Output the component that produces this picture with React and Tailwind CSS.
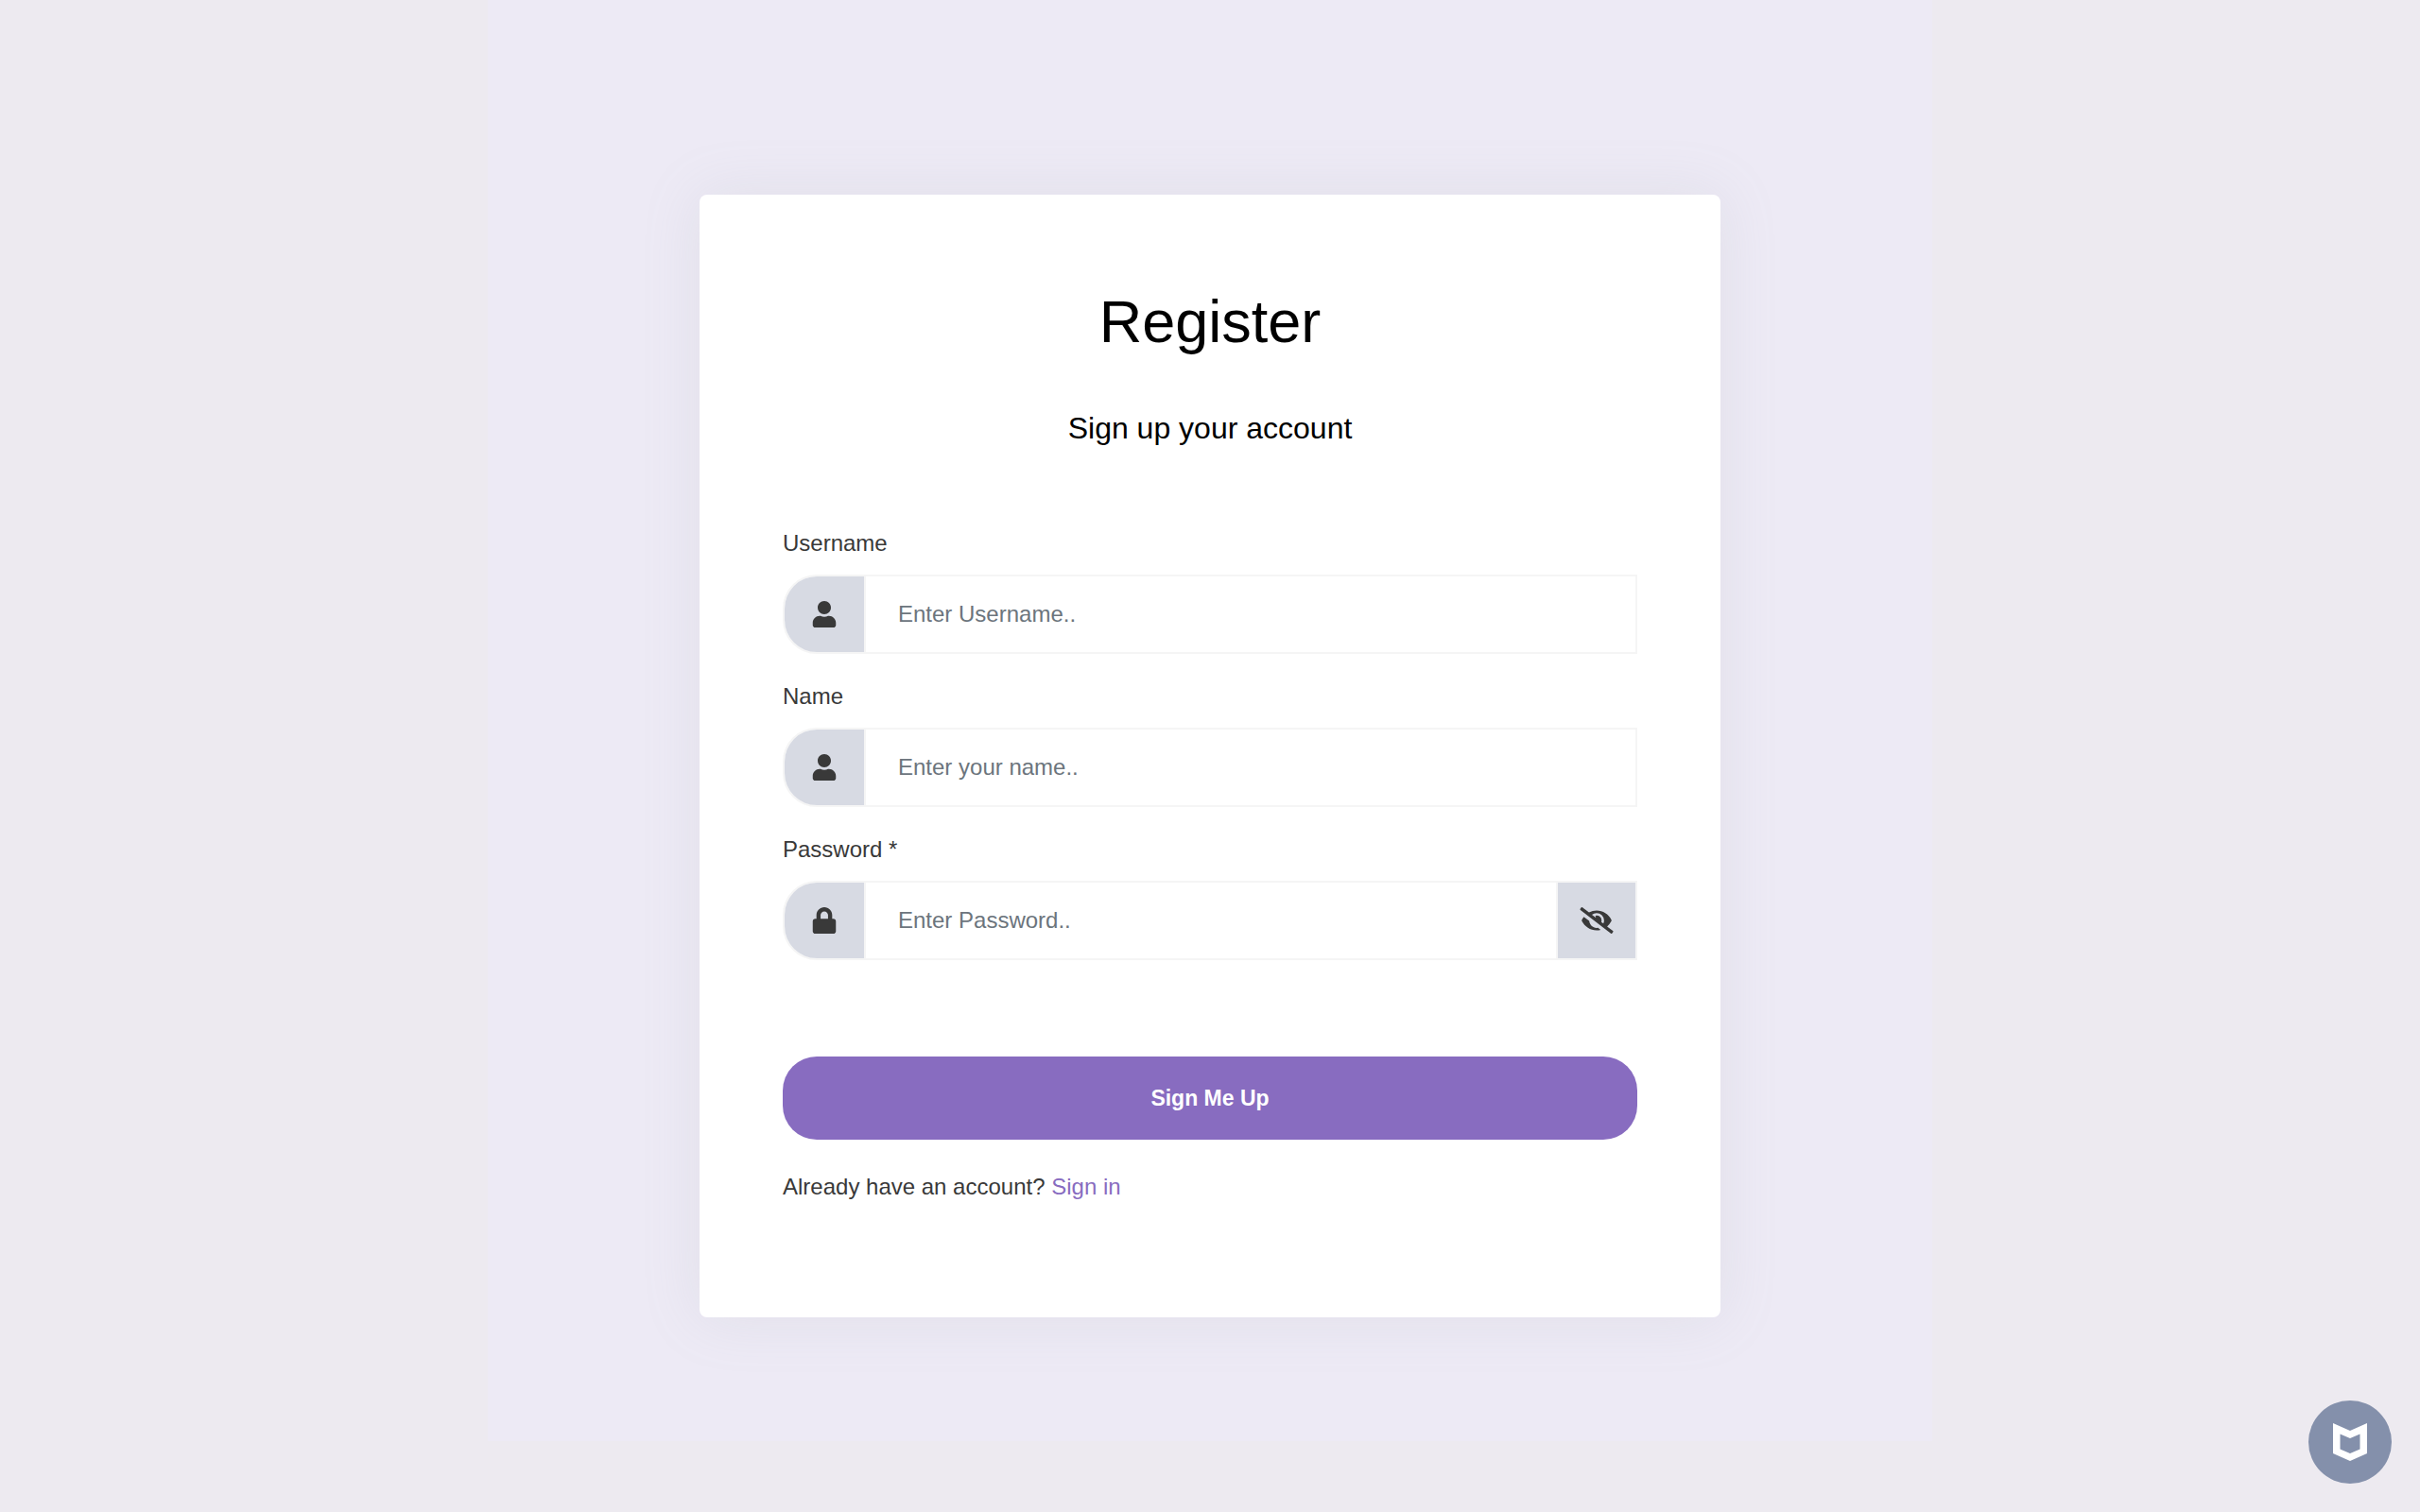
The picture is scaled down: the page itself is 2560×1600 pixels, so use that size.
import { useState } from "react";
import { FaUser, FaLock, FaEyeSlash, FaEye } from "react-icons/fa";

function Field({ id, label, icon: Icon, type = "text", placeholder, children }) {
  return (
    <div>
      <label htmlFor={id} className="block leading-9">{label}</label>
      <div className="mt-[15px] flex h-[84px] border-2 border-[#f5f5f5] rounded-l-[36px] overflow-hidden">
        <span className="flex w-[86px] shrink-0 items-center justify-center border-r-2 border-[#f5f5f5] bg-[#d7dae3]">
          <Icon className="h-7 w-7" />
        </span>
        <input
          id={id}
          type={type}
          placeholder={placeholder}
          className="min-w-0 flex-1 bg-white px-[34px] outline-none placeholder:text-[#6c757d]"
        />
        {children}
      </div>
    </div>
  );
}

export default function App() {
  const [shown, setShown] = useState(false);
  return (
    <div className="flex min-h-screen items-center justify-center bg-[#edeaf0] bg-[linear-gradient(#edeaf5,#edeaf5)] bg-[length:1528px_1525px] bg-top bg-no-repeat font-['Liberation_Sans',Arial,sans-serif] text-2xl text-[#393939]">
      <main className="w-full max-w-[1080px] rounded-lg bg-white px-[88px] pt-[88px] pb-[120px] shadow-[0_0_62px_rgba(154,161,171,0.15)]">
        <h1 className="text-center text-[63px] leading-[92px] text-black">Register</h1>
        <p className="mt-10 text-center text-[32px] leading-[54px] text-black">Sign up your account</p>
        <form className="mt-[77px]" onSubmit={(e) => e.preventDefault()}>
          <div className="flex flex-col gap-[27px]">
            <Field id="username" label="Username" icon={FaUser} placeholder="Enter Username.." />
            <Field id="name" label="Name" icon={FaUser} placeholder="Enter your name.." />
            <Field
              id="password"
              label="Password *"
              icon={FaLock}
              type={shown ? "text" : "password"}
              placeholder="Enter Password.."
            >
              <button
                type="button"
                aria-label="Toggle password visibility"
                onClick={() => setShown(!shown)}
                className="flex w-[84px] shrink-0 items-center justify-center border-l-2 border-[#f5f5f5] bg-[#d7dae3]"
              >
                {shown ? <FaEye className="h-7 w-9" /> : <FaEyeSlash className="h-7 w-9" />}
              </button>
            </Field>
          </div>
          <button
            type="submit"
            className="mt-[102px] h-[88px] w-full rounded-[36px] bg-[#886cc0] text-[23px] font-bold text-white"
          >
            Sign Me Up
          </button>
        </form>
        <p className="mt-8 leading-9">
          Already have an account? <a href="#signin" className="text-[#886cc0]">Sign in</a>
        </p>
      </main>
      <button
        type="button"
        aria-label="Web protection"
        className="fixed right-[30px] bottom-[30px] flex h-[88px] w-[88px] items-center justify-center rounded-full bg-[#8490ab]"
      >
        <svg viewBox="0 0 36 40" className="h-10 w-9" fill="#fff" fillRule="evenodd" aria-hidden="true">
          <path d="M0 0 18 8 36 0V32L18 40 0 32ZM7.500 11.500V27.500L18 32 28.500 27.500V11.500L18 16Z" />
        </svg>
      </button>
    </div>
  );
}
